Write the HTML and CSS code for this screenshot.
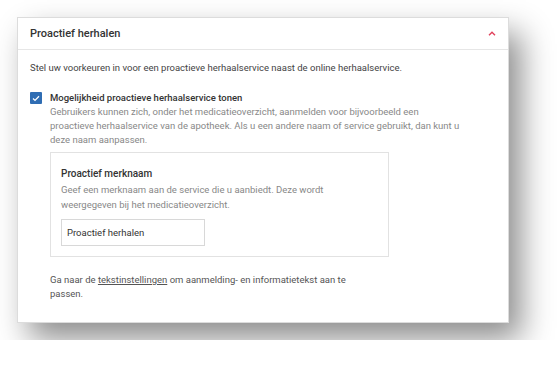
FILE: index.html
```html
<!DOCTYPE html>
<html lang="nl">
<head>
    <meta charset="UTF-8">
    <meta name="viewport" content="width=device-width, initial-scale=1.0">
    <title>Proactief herhalen</title>
    <link rel="stylesheet" href="styles.css">
</head>
<body>

<!-- Settings panel -->
<div class="panel">
    <div class="panel-header">
        <h2>Proactief herhalen</h2>
        <svg class="chevron" width="8" height="5" viewBox="0 0 8 5">
            <path d="M1 4.2 L4 1.2 L7 4.2" fill="none" stroke="#e0405a" stroke-width="1.4"/>
        </svg>
    </div>

    <div class="panel-body">
        <p class="intro">Stel uw voorkeuren in voor een proactieve herhaalservice naast de online herhaalservice.</p>

        <div class="option">
            <span class="checkbox">
                <svg width="8" height="7" viewBox="0 0 8 7">
                    <path d="M1 3.6 L3 5.4 L7 1.2" fill="none" stroke="#fff" stroke-width="1.3"/>
                </svg>
            </span>
            <div class="option-text">
                <div class="option-label">Mogelijkheid proactieve herhaalservice tonen</div>
                <p class="option-desc">Gebruikers kunnen zich, onder het medicatieoverzicht, aanmelden voor bijvoorbeeld een proactieve herhaalservice van de apotheek. Als u een andere naam of service gebruikt, dan kunt u deze naam aanpassen.</p>

                <!-- Brand name box -->
                <div class="sub-box">
                    <h3>Proactief merknaam</h3>
                    <p class="sub-desc">Geef een merknaam aan de service die u aanbiedt. Deze wordt weergegeven bij het medicatieoverzicht.</p>
                    <input type="text" class="name-input" value="Proactief herhalen">
                </div>

                <p class="footer-note">Ga naar de <a href="#">tekstinstellingen</a> om aanmelding- en informatietekst aan te passen.</p>
            </div>
        </div>
    </div>
</div>

</body>
</html>
```

FILE: styles.css
```css
/* Page */
body {
    font-family: Roboto, "Liberation Sans", sans-serif;
    background-color: #fff;
    margin: 0;
    padding: 17px;
    color: #444;
}

/* Panel card */
.panel {
    width: 492px;
    height: 306px;
    box-sizing: border-box;
    background-color: #fff;
    border: 1px solid #dcdcdc;
    box-shadow: 12px 16px 30px rgba(0, 0, 0, 0.45);
}

.panel-header {
    display: flex;
    justify-content: space-between;
    align-items: center;
    height: 31px;
    padding: 0 12px 0 12px;
    border-bottom: 1px solid #e6e6e6;
}

.panel-header h2 {
    margin: 0;
    font-size: 11px;
    font-weight: 500;
    color: #333;
}

.chevron {
    margin-top: -1px;
}

.panel-body {
    padding: 11px 12px 0 12px;
}

.intro {
    margin: 0 0 16px 0;
    font-size: 9.5px;
    line-height: 14px;
    color: #444;
}

/* Checkbox option */
.option {
    display: flex;
    gap: 8px;
}

.checkbox {
    display: flex;
    align-items: center;
    justify-content: center;
    flex: none;
    width: 12px;
    height: 12px;
    margin-top: 1px;
    background-color: #2f6db3;
    border-radius: 1px;
}

.option-label {
    font-size: 9.5px;
    font-weight: 500;
    line-height: 14px;
    color: #333;
}

.option-desc {
    max-width: 414px;
    margin: 0 0 5px 0;
    font-size: 9.5px;
    line-height: 14px;
    color: #888;
}

/* Brand name box */
.sub-box {
    width: 339px;
    box-sizing: border-box;
    padding: 15px 10px 10px 10px;
    border: 1px solid #e2e2e2;
}

.sub-box h3 {
    margin: 0 0 3px 0;
    font-size: 10px;
    font-weight: 500;
    color: #333;
}

.sub-desc {
    margin: 0 0 7px 0;
    font-size: 9.5px;
    line-height: 15px;
    color: #888;
}

.name-input {
    display: block;
    width: 144px;
    height: 27px;
    box-sizing: border-box;
    padding: 0 5px;
    border: 1px solid #d8d8d8;
    font-family: Roboto, "Liberation Sans", sans-serif;
    font-size: 9.5px;
    color: #333;
    outline: none;
}

.footer-note {
    max-width: 300px;
    margin: 16px 0 0 0;
    font-size: 9.5px;
    line-height: 14px;
    color: #555;
}

.footer-note a {
    color: #555;
    text-decoration: underline;
}
```
